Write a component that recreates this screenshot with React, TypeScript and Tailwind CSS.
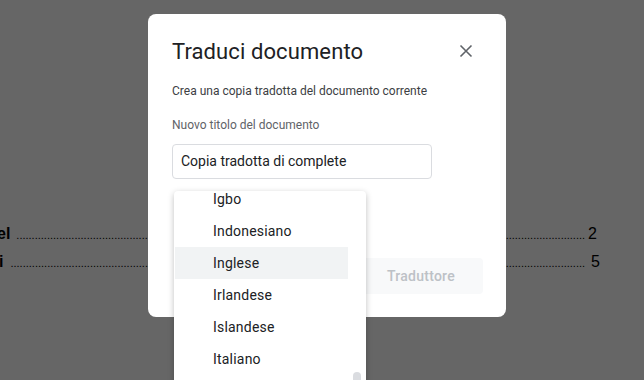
import React from "react";

const items = ["Igbo", "Indonesiano", "Inglese", "Irlandese", "Islandese", "Italiano"];

const DOTS = ".".repeat(80);

function Dots({ right, w }: { right?: boolean; w?: string }) {
  return (
    <span
      className={`${w ?? "flex-1"} overflow-hidden whitespace-nowrap text-[11px] leading-[14px] flex ${right ? "justify-end" : "justify-start"}`}
    >
      <span>{DOTS}</span>
    </span>
  );
}

export default function App() {
  return (
    <div className="relative w-[644px] h-[380px] overflow-hidden bg-[#666666] font-['Liberation_Sans',Arial,sans-serif] text-black">
      {/* background document (dimmed) */}
      <div className="flex flex-col pt-[224px] text-[16px] leading-[20px]">
        <div className="flex items-end h-[20px] pr-[47px]">
          <span className="font-bold -ml-[3px]">el</span>
          <span className="flex-1 flex items-end ml-[6px] mr-[3px] mb-[2px]">
            <Dots />
            <Dots right w="w-[200px]" />
          </span>
          <span>2</span>
        </div>
        <div className="flex items-end h-[20px] mt-[8px] pr-[44px]">
          <span className="font-bold -ml-[1px]">i</span>
          <span className="flex-1 flex items-end ml-[7px] mr-[6px] mb-[2px]">
            <Dots />
            <Dots right w="w-[200px]" />
          </span>
          <span>5</span>
        </div>
      </div>

      {/* dialog */}
      <div className="absolute left-[148px] top-[14px] w-[358px] h-[303px] rounded-[8px] bg-white font-['Roboto',sans-serif] flex flex-col px-[24px]">
        <div className="flex items-center justify-between h-[34px] mt-[21px]">
          <h1 className="text-[22px] leading-[28px] text-[#202124] font-normal tracking-[0.1px]">Traduci documento</h1>
          <svg width="14" height="14" viewBox="0 0 14 14" className="mr-[9px] -mt-[2px]">
            <path d="M1.5 1.5 L12.5 12.5 M12.5 1.5 L1.5 12.5" stroke="#5f6368" strokeWidth="1.6" />
          </svg>
        </div>
        <p className="mt-[14px] text-[12px] leading-[16px] text-[#3c4043]">Crea una copia tradotta del documento corrente</p>
        <p className="mt-[18px] text-[12px] leading-[16px] text-[#5f6368]">Nuovo titolo del documento</p>
        <div className="mt-[11px] w-[260px] h-[35px] rounded-[4px] border border-[#dadce0] flex items-center px-[8px] text-[14px] text-[#202124]">
          Copia tradotta di complete
        </div>
        <div className="flex justify-end mt-[79px] -mr-[1px]">
          <div className="w-[124px] h-[36px] rounded-[4px] bg-[#f8f9fa] flex items-center justify-center text-[14px] font-medium text-[#bdc1c6] tracking-[0.25px]">
            Traduttore
          </div>
        </div>
      </div>

      {/* dropdown */}
      <div className="absolute left-[174px] top-[191px] w-[192px] h-[200px] bg-white rounded-[4px] shadow-[0_2px_6px_rgba(0,0,0,0.25)] overflow-hidden font-['Roboto',sans-serif]">
        <div className="flex flex-col -mt-[8px] ml-[1px] w-[173px]">
          {items.map((it) => (
            <div
              key={it}
              className={`h-[32px] flex items-center pl-[38px] text-[14px] text-[#202124] tracking-[0.2px] ${it === "Inglese" ? "bg-[#f1f3f4]" : ""}`}
            >
              {it}
            </div>
          ))}
        </div>
        <div className="absolute left-[179px] top-[181px] w-[8px] h-[30px] rounded-full bg-[#dadce0]" />
      </div>
    </div>
  );
}
